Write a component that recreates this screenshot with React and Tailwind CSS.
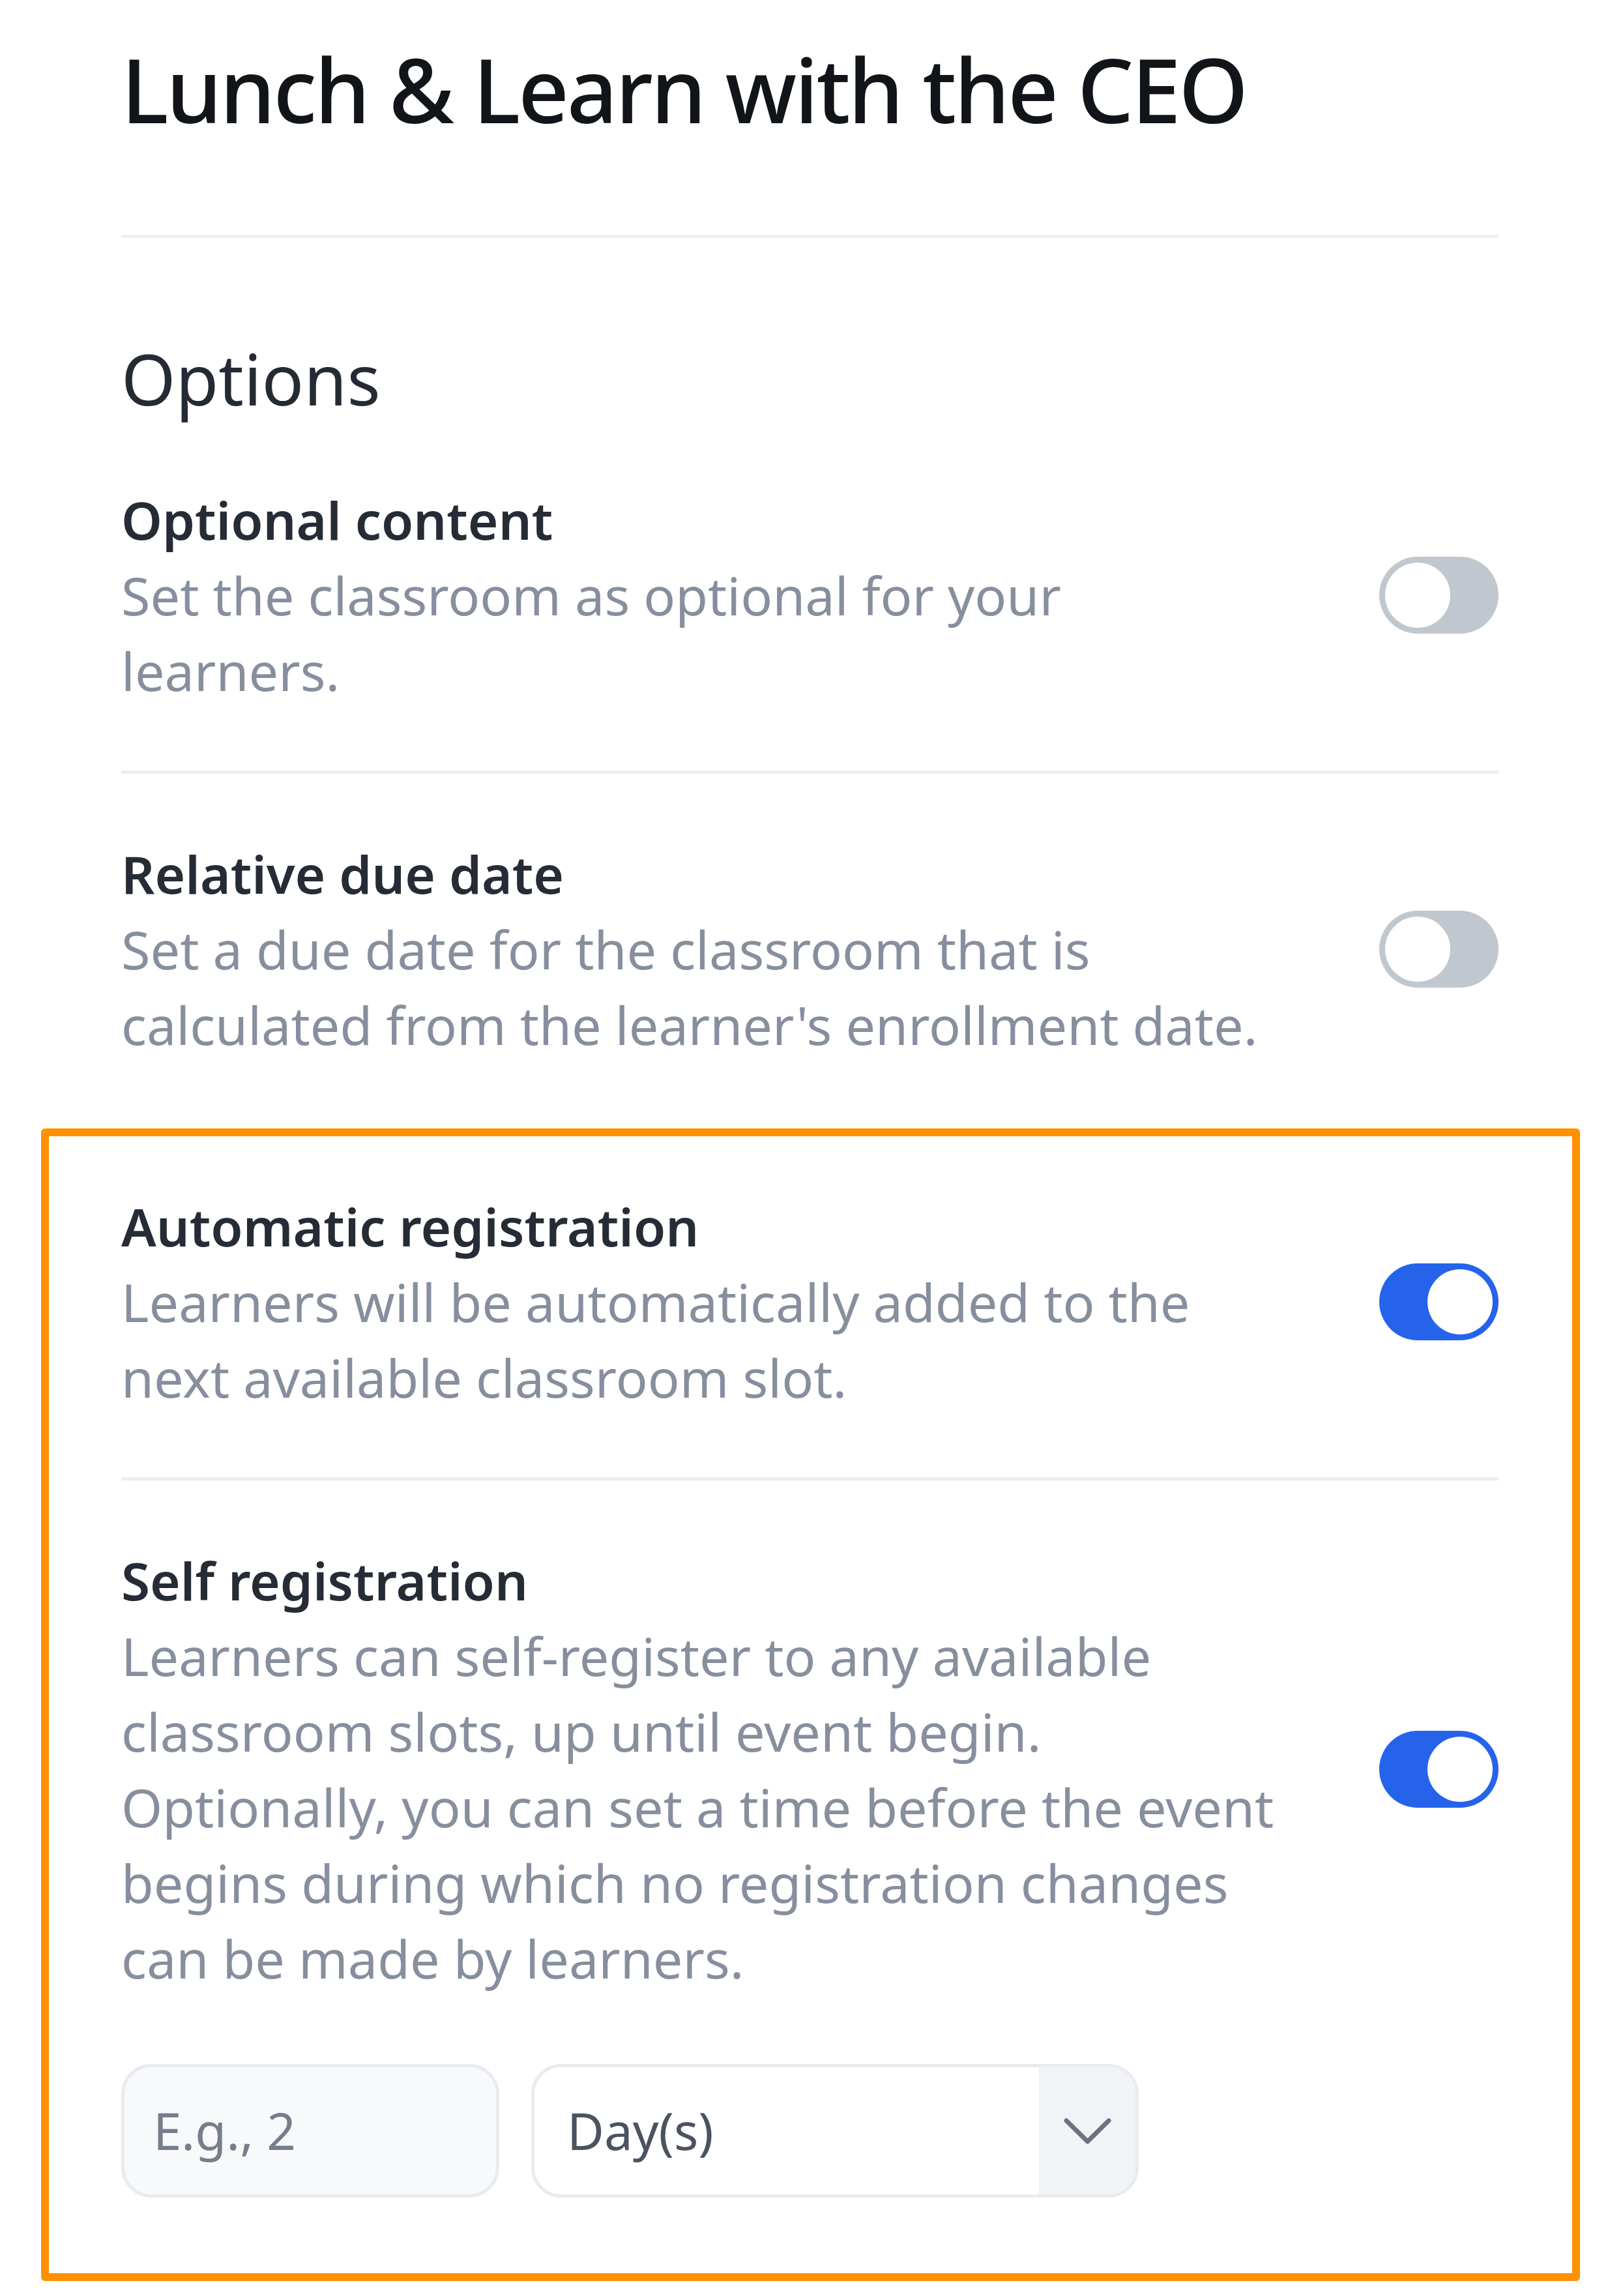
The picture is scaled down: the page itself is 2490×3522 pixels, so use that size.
import React from 'react';

const Toggle = ({ on }) => (
  <div
    className={`w-[183px] h-[118px] rounded-full flex items-center px-[9px] shrink-0 ${
      on ? 'bg-[#2563eb] justify-end' : 'bg-[#c1c7cf] justify-start'
    }`}
  >
    <div className="w-[100px] h-[100px] rounded-full bg-white" />
  </div>
);

const OptionRow = ({ label, lines, on }) => (
  <div className="flex items-center justify-between">
    <div className="w-[1780px]">
      <p className="text-[80px] leading-[116px] font-semibold text-[#262c36]">{label}</p>
      <p className="text-[81px] leading-[116px] text-[#878f9e]">
        {lines.map((l) => (
          <span key={l} className="block whitespace-nowrap">{l}</span>
        ))}
      </p>
    </div>
    <Toggle on={on} />
  </div>
);

const Divider = () => <div className="h-[5px] bg-[#eceef1] my-[95px]" />;

export default function App() {
  return (
    <div className="w-[2490px] min-h-[3522px] bg-white font-['Noto_Sans',sans-serif]">
      <div className="ml-[186px] w-[2113px] pt-[35px]">
        <h1 className="text-[136px] leading-[204px] font-medium tracking-[-3.3px] text-[#111418]">
          Lunch &amp; Learn with the CEO
        </h1>
        <div className="h-[5px] bg-[#eef1f1] mt-[121px]" />

        <h2 className="mt-[143px] text-[107px] leading-[146px] text-[#252b35]">Options</h2>

        <div className="mt-[85px]">
          <OptionRow
            label="Optional content"
            lines={['Set the classroom as optional for your', 'learners.']}
          />
          <Divider />
          <OptionRow
            label="Relative due date"
            lines={['Set a due date for the classroom that is', "calculated from the learner's enrollment date."]}
          />
        </div>

        <div className="mt-[101px] ml-[-123px] w-[2361px] border-[12px] border-[#ff9100] rounded-[6px] pt-[80px] pb-[116px] pl-[111px] pr-[113px]">
          <OptionRow
            label="Automatic registration"
            on
            lines={['Learners will be automatically added to the', 'next available classroom slot.']}
          />
          <Divider />
          <OptionRow
            label="Self registration"
            on
            lines={[
              'Learners can self-register to any available',
              'classroom slots, up until event begin.',
              'Optionally, you can set a time before the event',
              'begins during which no registration changes',
              'can be made by learners.',
            ]}
          />

          <div className="mt-[104px] flex gap-[49px]">
            <div className="w-[580px] h-[205px] rounded-[46px] border-[5px] border-[#e8ebef] bg-[#f8f9fb] flex items-center pl-[44px]">
              <span className="text-[78px] text-[#767e8c]">E.g., 2</span>
            </div>
            <div className="w-[932px] h-[205px] rounded-[46px] border-[5px] border-[#e8ebef] bg-white flex overflow-hidden">
              <div className="flex-1 flex items-center pl-[50px]">
                <span className="text-[78px] text-[#4b5260]">Day(s)</span>
              </div>
              <div className="w-[148px] bg-[#f1f3f6] flex items-center justify-center">
                <svg width="73" height="40" viewBox="0 0 73 40" fill="none">
                  <polyline
                    points="4,4 36.5,36 69,4"
                    stroke="#6b7280"
                    strokeWidth="7"
                    strokeLinecap="round"
                    strokeLinejoin="round"
                  />
                </svg>
              </div>
            </div>
          </div>
        </div>
      </div>
    </div>
  );
}
